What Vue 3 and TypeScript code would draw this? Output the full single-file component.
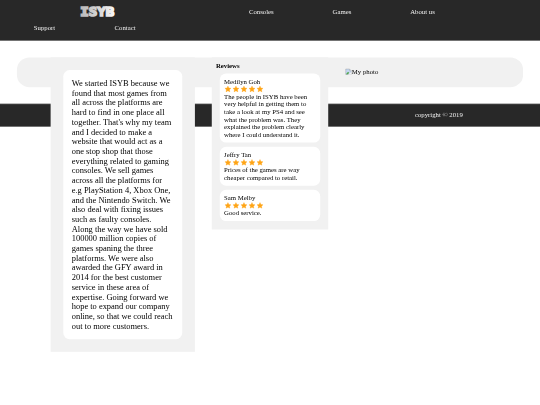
<script setup lang="ts">
interface Review {
  id: number
  name: string
  lines: string[]
}

const topLinks: string[] = ['Consoles', 'Games', 'About us']
const bottomLinks: string[] = ['Support', 'Contact']

const aboutLines: string[] = [
  'We started ISYB because we',
  'found that most games from',
  'all across the platforms are',
  'hard to find in one place all',
  "together. That's why my team",
  'and I decided to make a',
  'website that would act as a',
  'one stop shop that those',
  'everything related to gaming',
  'consoles. We sell games',
  'across all the platforms for',
  'e.g PlayStation 4, Xbox One,',
  'and the Nintendo Switch. We',
  'also deal with fixing issues',
  'such as faulty consoles.',
  'Along the way we have sold',
  '100000 million copies of',
  'games spaning the three',
  'platforms. We were also',
  'awarded the GFY award in',
  '2014 for the best customer',
  'service in these area of',
  'expertise. Going forward we',
  'hope to expand our company',
  'online, so that we could reach',
  'out to more customers.',
]

const reviews: Review[] = [
  {
    id: 1,
    name: 'Medilyn Goh',
    lines: [
      'The people in ISYB have been',
      'very helpful in getting them to',
      'take a look at my PS4 and see',
      'what the problem was. They',
      'explained the problem clearly',
      'where I could understand it.',
    ],
  },
  {
    id: 2,
    name: 'Jeffry Tan',
    lines: ['Prices of the games are way', 'cheaper compared to retail.'],
  },
  {
    id: 3,
    name: 'Sam Melby',
    lines: ['Good service.'],
  },
]
</script>

<template>
  <div class="viewport">
    <div class="page">
      <header class="header">
        <div class="nav-row">
          <a class="logo">
            <svg width="100" height="38" viewBox="0 0 100 38">
              <defs>
                <linearGradient id="logo-fill" gradientUnits="userSpaceOnUse" x1="10" y1="0" x2="90" y2="10">
                  <stop offset="0" stop-color="#b8b8b8" />
                  <stop offset="0.6" stop-color="#d8d8d8" />
                  <stop offset="1" stop-color="#f6f6f6" />
                </linearGradient>
              </defs>
              <text
                x="10.5"
                y="28.5"
                textLength="80"
                lengthAdjust="spacingAndGlyphs"
                fill="url(#logo-fill)"
                stroke="url(#logo-fill)"
                stroke-width="4"
              >ISYB</text>
            </svg>
          </a>
          <a v-for="link in topLinks" :key="link" class="nav-link">{{ link }}</a>
        </div>
        <div class="nav-row second">
          <a v-for="link in bottomLinks" :key="link" class="nav-link">{{ link }}</a>
        </div>
      </header>

      <main class="content">
        <section class="about">
          <p class="about-card">
            <span v-for="line in aboutLines" :key="line" class="line">{{ line }}</span>
          </p>
        </section>

        <section class="reviews">
          <h2>Reviews</h2>
          <article v-for="review in reviews" :key="review.id" class="review-card">
            <span class="line">{{ review.name }}</span>
            <div class="stars">
              <svg v-for="n in 5" :key="n" viewBox="0 0 24 24">
                <path d="M12 1.5l3.2 6.6 7.3 1-5.3 5.1 1.3 7.2-6.5-3.5-6.5 3.5 1.3-7.2-5.3-5.1 7.3-1z" />
              </svg>
            </div>
            <span v-for="line in review.lines" :key="line" class="line">{{ line }}</span>
          </article>
        </section>

        <div class="photo">
          <svg width="16" height="16" viewBox="0 0 16 16">
            <path d="M1.5 1.5h9l4 4v9h-13z" fill="#c5d7f2" stroke="#8b8f94" />
            <path d="M2 14l5-6 3 3-4 3z" fill="#4fa745" />
            <path d="M7 15l8-7v7z" fill="#f1f1f1" />
            <path d="M10.5 1.5v4h4" fill="#ffffff" stroke="#8b8f94" />
          </svg>
          <span>My photo</span>
        </div>
      </main>

      <footer class="footer">
        <span>copyright © 2019</span>
      </footer>
    </div>
  </div>
</template>

<style>
body {
  background: #ffffff;
}
</style>

<style scoped>
.viewport {
  width: 100vw;
  height: 100vh;
  overflow: hidden;
}

.page {
  width: 1280px;
  height: 960px;
  transform: scale(0.421875);
  transform-origin: 0 0;
  font-family: 'Liberation Serif', 'Times New Roman', serif;
  font-size: 16px;
  line-height: 18px;
  color: #000000;
}

.header {
  box-sizing: border-box;
  height: 97px;
  padding-top: 10px;
  background: #282828;
  border-bottom: 2px solid #808080;
}

.nav-row {
  display: flex;
  align-items: center;
  height: 38px;
}

.nav-row.second {
  padding-left: 10px;
}

.logo {
  display: flex;
  justify-content: center;
  width: 460px;
  margin-right: 64px;
}

.logo text {
  font-family: 'DejaVu Sans Mono', monospace;
  font-size: 31px;
  font-weight: 700;
}

.nav-link {
  width: 191px;
  text-align: center;
  color: #f1f1f1;
}

.content {
  position: relative;
  display: flex;
  align-items: flex-start;
  box-sizing: border-box;
  height: 71px;
  margin: 39px 40px;
  padding-left: 80px;
  background: #f1f1f1;
  border-radius: 30px;
}

.about {
  box-sizing: border-box;
  width: 342px;
  padding: 30px;
  background: #f1f1f1;
}

.about-card {
  margin: 0;
  padding: 20px;
  background: #ffffff;
  border-radius: 15px;
  font-size: 20px;
  line-height: 23px;
}

.line {
  display: block;
  white-space: nowrap;
}

.reviews {
  display: flex;
  flex-direction: column;
  gap: 10px;
  box-sizing: border-box;
  width: 276px;
  margin-left: 40px;
  padding: 10px 19px 20px;
  background: #f1f1f1;
}

.reviews h2 {
  margin: 0 0 0 -9px;
  font-size: 16px;
  font-weight: 700;
}

.review-card {
  padding: 10px;
  background: #ffffff;
  border-radius: 15px;
}

.stars {
  display: flex;
  align-items: center;
  gap: 2.4px;
  height: 18px;
  padding-left: 0.6px;
}

.stars svg {
  width: 16.6px;
  height: 16.6px;
  fill: #ffa516;
  stroke: #ffa516;
  stroke-width: 1px;
  stroke-linejoin: round;
}

.photo {
  display: flex;
  align-items: center;
  margin: 25px 0 0 40px;
}

.footer {
  display: flex;
  align-items: center;
  justify-content: flex-end;
  box-sizing: border-box;
  height: 55px;
  padding-right: 183px;
  background: #282828;
  border-top: 1px solid #808080;
  border-bottom: 2px solid #808080;
  color: #f1f1f1;
}
</style>
